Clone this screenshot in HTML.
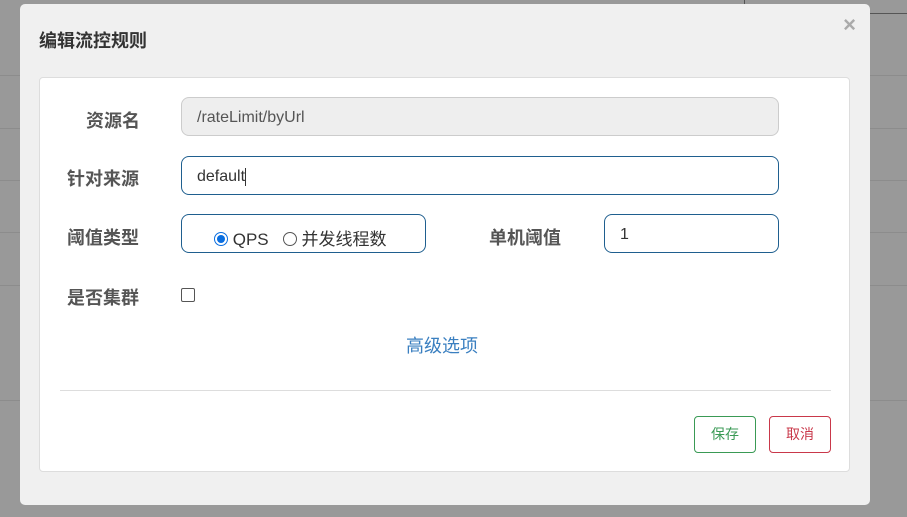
<!DOCTYPE html>
<html><head><meta charset="utf-8"><style>
*{box-sizing:border-box;margin:0;padding:0}
body{width:907px;height:517px;background:#999;position:relative;overflow:hidden;font-family:"Liberation Sans","Noto Sans CJK SC",sans-serif}
.hl{position:absolute;left:0;width:907px;height:1px;background:#8c8c8c}
.modal{position:absolute;left:20px;top:4px;width:850px;height:501px;background:#f0f0f0;border-radius:5px}
.title{position:absolute;left:19px;top:23px;font-size:18px;font-weight:bold;color:#333}
.close{position:absolute;right:14px;top:8px;font-size:22px;color:#aaa;font-weight:bold}
.panel{position:absolute;left:19px;top:73px;width:811px;height:395px;background:#fff;border:1px solid #ddd;border-radius:4px}
.lbl{position:absolute;font-size:18px;font-weight:bold;color:#555}
.inp{position:absolute;border:1px solid #1f5f8f;border-radius:8px;height:39px;font-size:16px;color:#333;padding:11px 15px 0;background:#fff}
.btn{position:absolute;top:338px;width:62px;height:37px;border-radius:4px;background:#fff;font-size:14px;text-align:center;line-height:35px}
</style></head><body>
<div class="hl" style="top:75px"></div><div class="hl" style="top:128px"></div><div class="hl" style="top:180px"></div><div class="hl" style="top:232px"></div><div class="hl" style="top:285px"></div><div class="hl" style="top:400px"></div>
<div style="position:absolute;left:744px;top:0;width:1px;height:8px;background:#555"></div>
<div style="position:absolute;left:869px;top:13px;width:38px;height:1px;background:#555"></div>
<div class="modal">
<div class="title">编辑流控规则</div>
<div class="close">×</div>
<div class="panel">
<div class="lbl" style="left:46px;top:29px">资源名</div>
<div class="inp" style="left:141px;top:19px;width:598px;background:#eee;border-color:#ccc;color:#555">/rateLimit/byUrl</div>
<div class="lbl" style="left:27px;top:87px">针对来源</div>
<div class="inp" style="left:141px;top:78px;width:598px">default<span style="border-left:1px solid #333;height:18px;display:inline-block;vertical-align:middle"></span></div>
<div class="lbl" style="left:27px;top:146px">阈值类型</div>
<div class="inp" style="left:141px;top:136px;width:245px;padding:10px 0 0 32px;font-size:17px">
<span style="display:inline-block;width:14px;height:14px;border-radius:50%;border:1px solid #0a6ee0;vertical-align:-1px;position:relative"><span style="position:absolute;left:2px;top:2px;width:8px;height:8px;border-radius:50%;background:#0a6ee0"></span></span> QPS&nbsp;&nbsp;
<span style="display:inline-block;width:14px;height:14px;border-radius:50%;border:1px solid #555;vertical-align:-1px"></span> 并发线程数</div>
<div class="lbl" style="left:449px;top:146px">单机阈值</div>
<div class="inp" style="left:564px;top:136px;width:175px">1</div>
<div class="lbl" style="left:27px;top:206px">是否集群</div>
<div style="position:absolute;left:141px;top:210px;width:14px;height:14px;border:1px solid #555;border-radius:2px"></div>
<div style="position:absolute;left:366px;top:254px;font-size:18px;color:#3a7fc0">高级选项</div>
<div style="position:absolute;left:20px;top:312px;width:771px;height:1px;background:#ddd"></div>
<div class="btn" style="left:654px;border:1px solid #3a9a55;color:#3a9a55">保存</div>
<div class="btn" style="left:729px;border:1px solid #c9384a;color:#c9384a">取消</div>
</div>
</div>
</body></html>
